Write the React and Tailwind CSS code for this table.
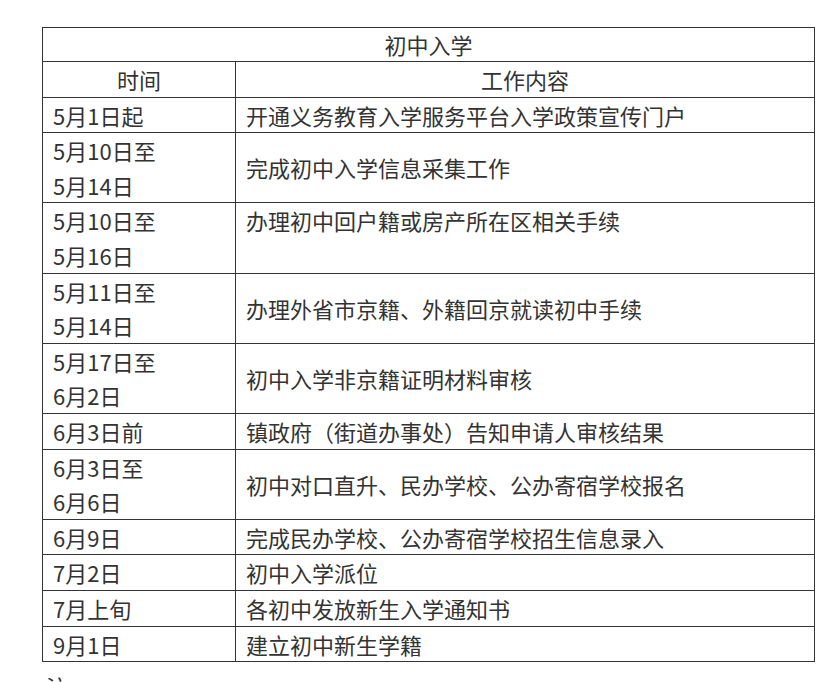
const rows = [
  { time: ["5月1日起"], work: "开通义务教育入学服务平台入学政策宣传门户" },
  { time: ["5月10日至", "5月14日"], work: "完成初中入学信息采集工作" },
  { time: ["5月10日至", "5月16日"], work: "办理初中回户籍或房产所在区相关手续", top: true },
  { time: ["5月11日至", "5月14日"], work: "办理外省市京籍、外籍回京就读初中手续" },
  { time: ["5月17日至", "6月2日"], work: "初中入学非京籍证明材料审核" },
  { time: ["6月3日前"], work: "镇政府（街道办事处）告知申请人审核结果" },
  { time: ["6月3日至", "6月6日"], work: "初中对口直升、民办学校、公办寄宿学校报名" },
  { time: ["6月9日"], work: "完成民办学校、公办寄宿学校招生信息录入" },
  { time: ["7月2日"], work: "初中入学派位" },
  { time: ["7月上旬"], work: "各初中发放新生入学通知书" },
  { time: ["9月1日"], work: "建立初中新生学籍" },
];

export default function App() {
  return (
    <div className="w-[833px] h-[682px] overflow-hidden bg-white pt-[27px] pl-[42px] text-[#333333] font-['Noto_Sans_CJK_SC',sans-serif]">
      <table className="w-[773px] border-collapse text-[22px] leading-[34.6px]">
        <tbody>
          <tr>
            <td colSpan={2} className="border border-[#333333] text-center leading-[33px]">
              初中入学
            </td>
          </tr>
          <tr>
            <td className="w-[193px] border border-[#333333] text-center">时间</td>
            <td className="border border-[#333333] text-center">工作内容</td>
          </tr>
          {rows.map((r, i) => (
            <tr key={i}>
              <td className="border border-[#333333] px-[10px] align-top">
                {r.time.map((t, j) => (
                  <div key={j}>{t}</div>
                ))}
              </td>
              <td className={"border border-[#333333] px-[10px] " + (r.top ? "align-top" : "align-middle")}>
                {r.work}
              </td>
            </tr>
          ))}
        </tbody>
      </table>
      <p className="mt-[7px] pl-[4px] text-[22px] leading-[34px]">注：</p>
    </div>
  );
}
